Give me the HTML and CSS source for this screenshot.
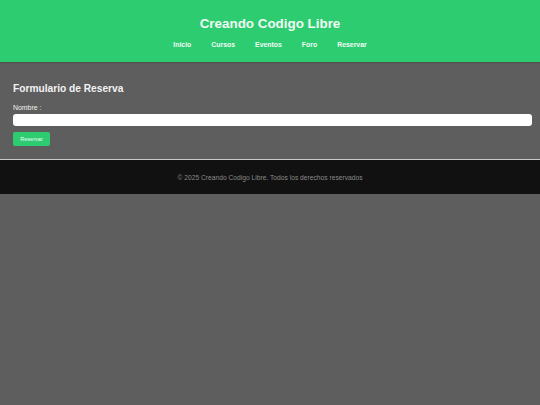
FILE: index.html
```html
<!DOCTYPE html>
<html lang="es">
<head>
<meta charset="utf-8">
<title>Creando Codigo Libre</title>
<link rel="stylesheet" href="styles.css">
</head>
<body>
<header class="site-header">
  <h1 class="site-title">Creando Codigo Libre</h1>
  <nav class="site-nav">
    <a href="#">Inicio</a>
    <a href="#">Cursos</a>
    <a href="#">Eventos</a>
    <a href="#">Foro</a>
    <a href="#">Reservar</a>
  </nav>
</header>
<main class="content">
  <h2 class="form-title">Formulario de Reserva</h2>
  <form class="form">
    <label class="form-label" for="nombre">Nombre :</label>
    <input class="form-input" type="text" id="nombre">
    <button class="form-button" type="button">Reservar</button>
  </form>
</main>
<footer class="site-footer">
  <p class="footer-text">© 2025 Creando Codigo Libre. Todos los derechos reservados</p>
</footer>
</body>
</html>
```
FILE: styles.css
```css
html, body {
  margin: 0;
  padding: 0;
  background: #5e5e5e;
  font-family: "Liberation Sans", Arial, sans-serif;
}
.site-header {
  background: #2ecc71;
  padding: 15px 0 12px;
  text-align: center;
  box-shadow: 0 1px 1px rgba(0,0,0,0.15);
}
.site-title {
  margin: 0;
  font-size: 13.4px;
  line-height: 18px;
  font-weight: bold;
  color: #f0fbf4;
}
.site-nav {
  margin-top: 7px;
  display: flex;
  justify-content: center;
  gap: 20px;
  line-height: 10px;
}
.site-nav a {
  color: #f0fbf4;
  font-size: 6.9px;
  font-weight: bold;
  text-decoration: none;
}
.content {
  padding: 21px 8px 13px 13px;
}
.form-title {
  margin: 0 0 8.5px;
  font-size: 10.2px;
  line-height: 12px;
  font-weight: bold;
  color: #f2f2f2;
}
.form {
  display: flex;
  flex-direction: column;
  align-items: flex-start;
}
.form-label {
  font-size: 6.9px;
  line-height: 8px;
  color: #f2f2f2;
  margin-bottom: 2.5px;
}
.form-input {
  box-sizing: border-box;
  width: 100%;
  height: 12px;
  margin: 0;
  border: none;
  border-radius: 3px;
  background: #ffffff;
  padding: 0 4px;
}
.form-button {
  margin-top: 6px;
  height: 14px;
  width: 37px;
  padding: 0;
  border: none;
  border-radius: 2px;
  background: #2ecc71;
  color: #f0fbf4;
  font-family: "Liberation Sans", Arial, sans-serif;
  font-size: 5.6px;
}
.site-footer {
  border-top: 1px solid #c8c8c8;
  background: #111111;
  padding: 14px 0 12px;
  text-align: center;
}
.footer-text {
  margin: 0;
  font-size: 6.7px;
  line-height: 8px;
  color: #8a8a8a;
}
```
